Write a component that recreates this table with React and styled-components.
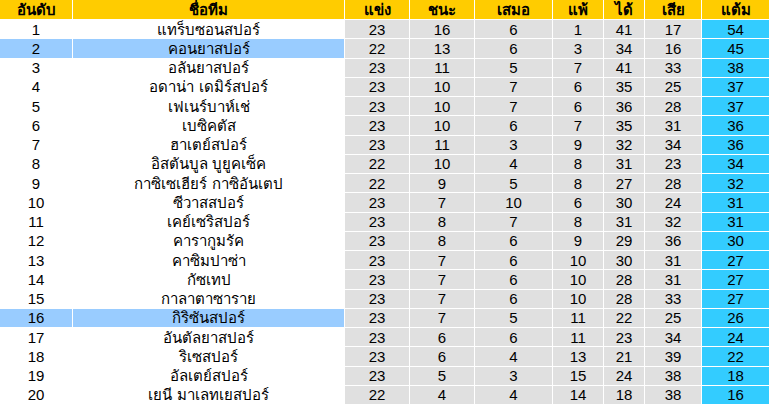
import React from "react"
import styled, { createGlobalStyle } from "styled-components"

const GlobalStyle = createGlobalStyle`
    html, body {
        margin: 0;
        padding: 0;
        background: #ffffff;
    }
`

const Table = styled.div`
    display: grid;
    grid-template-columns: 72px 271px 64px 64px 77px 50px 40px 56px 67px;
    grid-template-rows: 19px repeat(20, 1fr);
    gap: 1px;
    width: 769px;
    height: 404px;
    background: #ffffff;
    font-family: "Liberation Sans", Tahoma, "Noto Sans", sans-serif;
    font-size: 15px;
    color: #000000;
`

const Head = styled.div`
    display: flex;
    align-items: center;
    justify-content: center;
    background: #ffcc00;
    font-weight: 700;
    line-height: 1;
`

const Cell = styled.div`
    display: flex;
    align-items: center;
    justify-content: center;
    line-height: 1;
    background: ${(p) =>
        p.$kind === "pts" ? "#33ccff" : p.$kind === "stat" ? "#e0e0e0" : p.$hl ? "#99ccff" : "#ffffff"};
`

const headers = ["อันดับ", "ชื่อทีม", "แข่ง", "ชนะ", "เสมอ", "แพ้", "ได้", "เสีย", "แต้ม"]

const rows = [
    ["แทร็บซอนสปอร์", 23, 16, 6, 1, 41, 17, 54],
    ["คอนยาสปอร์", 22, 13, 6, 3, 34, 16, 45],
    ["อลันยาสปอร์", 23, 11, 5, 7, 41, 33, 38],
    ["อดาน่า เดมิร์สปอร์", 23, 10, 7, 6, 35, 25, 37],
    ["เฟเนร์บาห์เช่", 23, 10, 7, 6, 36, 28, 37],
    ["เบซิคตัส", 23, 10, 6, 7, 35, 31, 36],
    ["ฮาเตย์สปอร์", 23, 11, 3, 9, 32, 34, 36],
    ["อิสตันบูล บูยูคเซ็ค", 22, 10, 4, 8, 31, 23, 34],
    ["กาซิเซเฮียร์ กาซิอันเตป", 22, 9, 5, 8, 27, 28, 32],
    ["ซีวาสสปอร์", 23, 7, 10, 6, 30, 24, 31],
    ["เคย์เซริสปอร์", 23, 8, 7, 8, 31, 32, 31],
    ["คารากูมรัค", 23, 8, 6, 9, 29, 36, 30],
    ["คาซิมปาซ่า", 23, 7, 6, 10, 30, 31, 27],
    ["กัซเทป", 23, 7, 6, 10, 28, 31, 27],
    ["กาลาตาซาราย", 23, 7, 6, 10, 28, 33, 27],
    ["กิริซันสปอร์", 23, 7, 5, 11, 22, 25, 26],
    ["อันตัลยาสปอร์", 23, 6, 6, 11, 23, 34, 24],
    ["ริเซสปอร์", 23, 6, 4, 13, 21, 39, 22],
    ["อัลเตย์สปอร์", 23, 5, 3, 15, 24, 38, 18],
    ["เยนี มาเลทเยสปอร์", 22, 4, 4, 14, 18, 38, 16],
]

const highlighted = [2, 16]

export default function App() {
    return (
        <>
            <GlobalStyle />
            <Table>
                {headers.map((h) => (
                    <Head key={h}>{h}</Head>
                ))}
                {rows.map((r, i) => {
                    const rank = i + 1
                    const hl = highlighted.includes(rank)
                    const [team, ...stats] = r
                    return (
                        <React.Fragment key={team}>
                            <Cell $hl={hl}>{rank}</Cell>
                            <Cell $hl={hl}>{team}</Cell>
                            {stats.map((s, j) => (
                                <Cell key={j} $kind={j === stats.length - 1 ? "pts" : "stat"}>
                                    {s}
                                </Cell>
                            ))}
                        </React.Fragment>
                    )
                })}
            </Table>
        </>
    )
}
